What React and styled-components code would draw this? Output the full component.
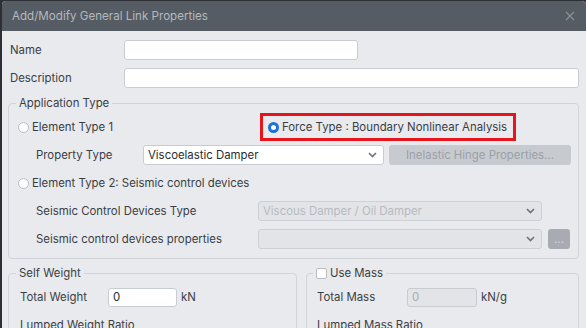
import React from "react";
import styled, { createGlobalStyle } from "styled-components";

const GlobalStyle = createGlobalStyle`
  html, body {
    margin: 0;
    padding: 0;
    background: #2c3035;
    overflow: hidden;
  }
  body {
    font-family: Inter, "Noto Sans", sans-serif;
    font-size: 11.4px;
    color: #3a3e44;
  }
`;

const Dialog = styled.div`
  margin: 1px 0 0 2px;
  width: 584px;
  height: 327px;
  background: #e9eaed;
  border-radius: 4px 4px 0 0;
  overflow: hidden;
`;

const TitleBar = styled.div`
  height: 30px;
  background: #565c63;
  display: flex;
  align-items: center;
  justify-content: space-between;
  padding: 0 11px 0 10px;
`;

const Title = styled.span`
  color: #b4b9bf;
  font-size: 11.6px;
`;

const Body = styled.div`
  padding: 9px 7px 0 6px;
`;

const FieldRow = styled.div`
  display: flex;
  align-items: center;
  padding-left: 2px;
  margin-bottom: 8px;
`;

const Label = styled.span`
  width: ${(p) => p.$w || 114}px;
  flex-shrink: 0;
  white-space: nowrap;
  padding-left: ${(p) => p.$indent || 0}px;
  box-sizing: border-box;
`;

const TextInput = styled.input`
  box-sizing: border-box;
  height: ${(p) => p.$h || 20}px;
  width: ${(p) => (p.$w ? `${p.$w}px` : "auto")};
  flex: ${(p) => (p.$w ? "none" : 1)};
  border: 1px solid #c8ccd1;
  border-radius: 3px;
  background: ${(p) => (p.disabled ? "#e2e4e7" : "#fff")};
  color: ${(p) => (p.disabled ? "#a9adb3" : "#2a2d31")};
  font: inherit;
  padding: 0 4px;
  outline: none;
`;

const Group = styled.fieldset`
  margin: ${(p) => p.$mt || 0}px 0 0 0;
  padding: 0;
  min-width: 0;
  border: 1px solid #d0d3d7;
  border-radius: 4px;
`;

const Legend = styled.legend`
  margin-left: ${(p) => p.$ml || 7}px;
  padding: 0 3px;
  line-height: 14px;
  display: flex;
  align-items: center;
  gap: 3px;
  color: #3a3e44;
`;

const GroupBody = styled.div`
  padding: 3px 7px ${(p) => p.$pb || 0}px ${(p) => p.$pl || 9}px;
`;

const Line = styled.div`
  height: 28px;
  display: flex;
  align-items: center;
`;

const RadioItem = styled.label`
  display: flex;
  align-items: center;
  gap: 3px;
  width: ${(p) => (p.$w ? `${p.$w}px` : "auto")};
  white-space: nowrap;
`;

const RadioDot = styled.span`
  box-sizing: border-box;
  width: 11px;
  height: 11px;
  border-radius: 50%;
  background: #fff;
  border: ${(p) => (p.$on ? "3px solid #1b6fe0" : "1px solid #b9bdc2")};
  flex-shrink: 0;
`;

const Highlight = styled.div`
  box-sizing: border-box;
  width: 256px;
  height: 28px;
  border: 3px solid #e8141c;
  display: flex;
  align-items: center;
  padding-left: 5px;
`;

const Select = styled.div`
  box-sizing: border-box;
  width: ${(p) => p.$w}px;
  height: 20px;
  flex-shrink: 0;
  display: flex;
  align-items: center;
  justify-content: space-between;
  padding: 0 6px 0 4px;
  border: 1px solid ${(p) => (p.$disabled ? "#cdd0d4" : "#c8ccd1")};
  border-radius: 3px;
  background: ${(p) => (p.$disabled ? "#e2e4e7" : "#fff")};
  color: ${(p) => (p.$disabled ? "#b7bbc0" : "#2a2d31")};
  white-space: nowrap;
`;

const Button = styled.button`
  box-sizing: border-box;
  height: 20px;
  margin-left: ${(p) => p.$ml || 5}px;
  width: ${(p) => (p.$w ? `${p.$w}px` : "auto")};
  flex: ${(p) => (p.$w ? "none" : 1)};
  border: none;
  border-radius: 3px;
  background: ${(p) => p.$bg || "#c7cbd0"};
  color: ${(p) => p.$fg || "#9ba0a6"};
  font: inherit;
  padding: 0;
  line-height: 20px;
`;

const Unit = styled.span`
  margin-left: 4px;
`;

const Columns = styled.div`
  display: grid;
  grid-template-columns: 289px 1fr;
  gap: 9px;
`;

const CheckBox = styled.span`
  box-sizing: border-box;
  width: 11px;
  height: 11px;
  border: 1px solid #b9bdc2;
  border-radius: 2px;
  background: #fff;
`;

const Chevron = () => (
  <svg width="9" height="6" viewBox="0 0 9 6">
    <path d="M1 1 L4.5 4.5 L8 1" fill="none" stroke="#6d7279" strokeWidth="1.6" />
  </svg>
);

const CloseIcon = () => (
  <svg width="10" height="10" viewBox="0 0 10 10">
    <path d="M1 1 L9 9 M9 1 L1 9" stroke="#8c9197" strokeWidth="1.1" />
  </svg>
);

export default function App() {
  return (
    <>
      <GlobalStyle />
      <Dialog>
        <TitleBar>
          <Title>Add/Modify General Link Properties</Title>
          <CloseIcon />
        </TitleBar>
        <Body>
          <FieldRow>
            <Label>Name</Label>
            <TextInput $w={234} />
          </FieldRow>
          <FieldRow>
            <Label>Description</Label>
            <TextInput />
          </FieldRow>

          <Group $mt={0}>
            <Legend>Application Type</Legend>
            <GroupBody $pb={5}>
              <Line>
                <RadioItem $w={242}>
                  <RadioDot />
                  Element Type 1
                </RadioItem>
                <Highlight>
                  <RadioItem>
                    <RadioDot $on />
                    Force Type : Boundary Nonlinear Analysis
                  </RadioItem>
                </Highlight>
              </Line>
              <Line>
                <Label $w={125} $indent={18}>Property Type</Label>
                <Select $w={241}>
                  Viscoelastic Damper
                  <Chevron />
                </Select>
                <Button>Inelastic Hinge Properties...</Button>
              </Line>
              <Line>
                <RadioItem>
                  <RadioDot />
                  Element Type 2: Seismic control devices
                </RadioItem>
              </Line>
              <Line>
                <Label $w={240} $indent={18}>Seismic Control Devices Type</Label>
                <Select $w={284} $disabled>
                  Viscous Damper / Oil Damper
                  <Chevron />
                </Select>
              </Line>
              <Line>
                <Label $w={240} $indent={18}>Seismic control devices properties</Label>
                <Select $w={284} $disabled>
                  <span />
                  <Chevron />
                </Select>
                <Button $w={22} $ml={6} $bg="#a8acb2" $fg="#d2d5d9">...</Button>
              </Line>
            </GroupBody>
          </Group>

          <Columns>
            <Group $mt={7}>
              <Legend>Self Weight</Legend>
              <GroupBody $pl={11}>
                <Line>
                  <Label $w={88}>Total Weight</Label>
                  <TextInput $w={69} $h={19} defaultValue="0" />
                  <Unit>kN</Unit>
                </Line>
                <Line>
                  <Label $w={200}>Lumped Weight Ratio</Label>
                </Line>
              </GroupBody>
            </Group>
            <Group $mt={7}>
              <Legend $ml={6}>
                <CheckBox />
                Use Mass
              </Legend>
              <GroupBody $pl={10}>
                <Line>
                  <Label $w={90}>Total Mass</Label>
                  <TextInput $w={70} $h={19} defaultValue="0" disabled />
                  <Unit>kN/g</Unit>
                </Line>
                <Line>
                  <Label $w={200}>Lumped Mass Ratio</Label>
                </Line>
              </GroupBody>
            </Group>
          </Columns>
        </Body>
      </Dialog>
    </>
  );
}
